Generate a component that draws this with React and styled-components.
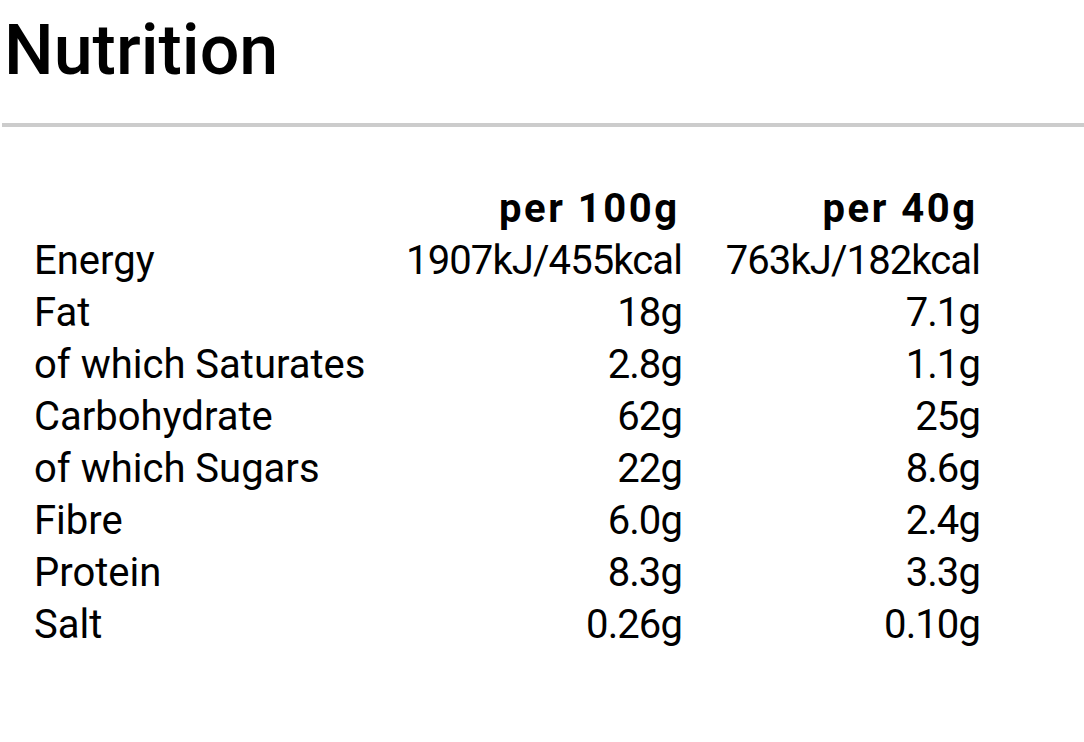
import React from "react";
import styled, { createGlobalStyle } from "styled-components";

const Global = createGlobalStyle`
  html, body { margin: 0; padding: 0; background: #fff; }
  body { font-family: Roboto, "DejaVu Sans", sans-serif; color: #000; }
`;

const Page = styled.div`
  width: 1084px;
  padding-top: 8px;
`;

const Title = styled.h1`
  margin: 0;
  padding-left: 4px;
  font-size: 70px;
  line-height: 84px;
  font-weight: 500;
`;

const Divider = styled.hr`
  margin: 31px 0 0 2px;
  border: 0;
  height: 4px;
  background: #cccccc;
`;

const Table = styled.div`
  display: grid;
  grid-template-columns: 368px 280px 298px;
  padding: 56px 0 0 34px;
  font-size: 40px;
  line-height: 52px;
`;

const Cell = styled.div`
  text-align: ${(p) => (p.$num ? "right" : "left")};
  font-weight: ${(p) => (p.$head ? 700 : 400)};
  letter-spacing: ${(p) => (p.$head ? "2.5px" : p.$num ? "-0.9px" : "0")};
  padding-right: ${(p) => (p.$head ? "2.5px" : "0")};
  white-space: nowrap;
`;

const rows = [
  ["Energy", "1907kJ/455kcal", "763kJ/182kcal"],
  ["Fat", "18g", "7.1g"],
  ["of which Saturates", "2.8g", "1.1g"],
  ["Carbohydrate", "62g", "25g"],
  ["of which Sugars", "22g", "8.6g"],
  ["Fibre", "6.0g", "2.4g"],
  ["Protein", "8.3g", "3.3g"],
  ["Salt", "0.26g", "0.10g"],
];

export default function App() {
  return (
    <Page>
      <Global />
      <Title>Nutrition</Title>
      <Divider />
      <Table>
        <Cell />
        <Cell $num $head>per 100g</Cell>
        <Cell $num $head>per 40g</Cell>
        {rows.map(([l, a, b]) => (
          <React.Fragment key={l}>
            <Cell>{l}</Cell>
            <Cell $num>{a}</Cell>
            <Cell $num>{b}</Cell>
          </React.Fragment>
        ))}
      </Table>
    </Page>
  );
}
